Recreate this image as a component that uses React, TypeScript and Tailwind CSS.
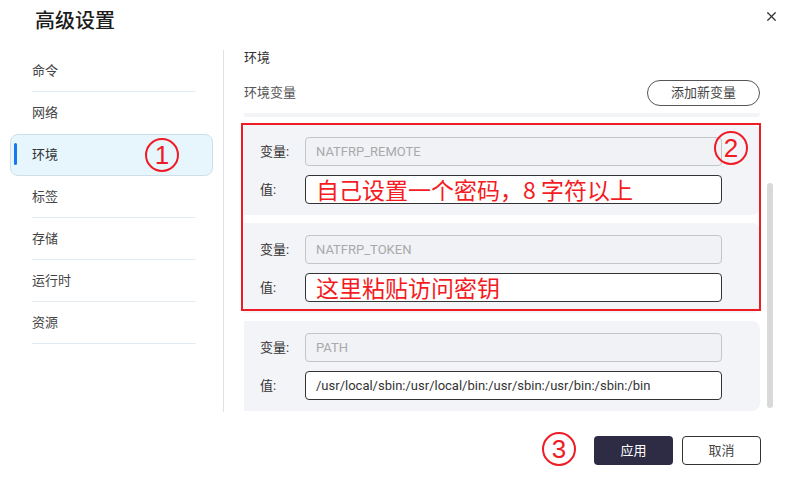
import React from "react";
import { X } from "lucide-react";

const font = "'Roboto', 'Noto Sans CJK SC', sans-serif";
const cjk = "'Noto Sans CJK SC', sans-serif";

const navItems = ["命令", "网络", "环境", "标签", "存储", "运行时", "资源"];
const selected = 2;

interface EnvVar {
  name: string;
  value: string;
  hint?: boolean;
}

const envVars: EnvVar[] = [
  { name: "NATFRP_REMOTE", value: "自己设置一个密码，8 字符以上", hint: true },
  { name: "NATFRP_TOKEN", value: "这里粘贴访问密钥", hint: true },
  { name: "PATH", value: "/usr/local/sbin:/usr/local/bin:/usr/sbin:/usr/bin:/sbin:/bin" },
];

function Mark({ n }: { n: string }) {
  return (
    <span
      className="flex h-[34px] w-[34px] items-center justify-center rounded-full border-2 border-[#ee1c25] text-[26px] leading-none text-[#ee1c25]"
      style={{ fontFamily: "'Liberation Sans', sans-serif" }}
    >
      {n}
    </span>
  );
}

function EnvCard({ v }: { v: EnvVar }) {
  return (
    <div className="flex h-[90px] shrink-0 flex-col gap-[9px] rounded-r-lg bg-[#f3f4f8] pl-4 pt-[12px]">
      <div className="flex items-center">
        <span className="w-[45px] text-[13px] leading-[18px] text-[#333]">变量:</span>
        <div className="flex h-[29px] w-[417px] items-center rounded-[4px] border border-[#c4c5c9] bg-[#f1f2f6] px-[10px] text-[13px] text-[#a9a9a9]">
          {v.name}
        </div>
      </div>
      <div className="flex items-center">
        <span className="w-[45px] text-[13px] leading-[18px] text-[#333]">值:</span>
        <div className="flex h-[29px] w-[417px] items-center whitespace-nowrap rounded-[4px] border border-[#333] bg-white px-[10px]">
          {v.hint ? (
            <span className="text-[23px] leading-[23px] text-[#f41b23]" style={{ fontFamily: cjk }}>
              {v.value}
            </span>
          ) : (
            <span className="text-[13px] text-[#333]">{v.value}</span>
          )}
        </div>
      </div>
    </div>
  );
}

export default function App() {
  return (
    <div className="relative flex h-[478px] w-[789px] flex-col bg-white text-[#333]" style={{ fontFamily: font }}>
      {/* 标题 */}
      <div className="h-[50px] pl-[35px] pt-[8px]">
        <h1 className="text-[20px] leading-[24px] font-medium text-[#1c1c1c]" style={{ fontFamily: cjk }}>
          高级设置
        </h1>
      </div>
      <button className="absolute right-[10px] top-[9px] text-[#333]">
        <X className="h-[15px] w-[15px]" strokeWidth={2} />
      </button>

      <div className="flex h-[362px]">
        {/* 左侧导航 */}
        <div className="w-[224px] border-r border-[#dfe3e8] px-[10px]">
          {navItems.map((item, i) => {
            const active = i === selected;
            const beforeActive = i === selected - 1;
            return (
              <div
                key={item}
                className={
                  active
                    ? "relative flex h-[42px] items-center rounded-lg border border-[#cde0ea] bg-[#e7f6fd] pl-[21px]"
                    : "flex h-[42px] items-center pl-[22px] pr-[17px]"
                }
              >
                {active ? (
                  <>
                    <span className="absolute left-[3px] top-[8px] h-[22px] w-[3px] rounded-full bg-[#1677ee]" />
                    <span className="text-[13px] text-[#333]">{item}</span>
                    <span className="absolute left-[134px] top-[3px]">
                      <Mark n="1" />
                    </span>
                  </>
                ) : (
                  <div
                    className={
                      beforeActive
                        ? "flex h-full w-full items-center"
                        : "flex h-full w-full items-center border-b border-[#e3ecf2]"
                    }
                  >
                    <span className="text-[13px] text-[#444]">{item}</span>
                  </div>
                )}
              </div>
            );
          })}
        </div>

        {/* 右侧内容 */}
        <div className="relative flex-1 pl-[20px] pr-[29px]">
          <div className="-mt-[1px] h-[18px] text-[13px] leading-[18px] text-[#333]">环境</div>
          <div className="mt-[13px] flex h-[26px] items-center justify-between">
            <span className="text-[13px] leading-[18px] text-[#555]">环境变量</span>
            <button className="h-[26px] w-[113px] rounded-full border border-[#555] text-[13px] leading-[18px] text-[#444]">
              添加新变量
            </button>
          </div>

          <div className="relative mt-[7px]">
            <div className="flex h-[299px] flex-col gap-[8px] overflow-hidden">
              {/* 上一张卡片滚出后留下的底边 */}
              <div className="h-[4px] shrink-0 rounded-br-lg bg-[#f3f4f8]" />
              {envVars.map((v) => (
                <EnvCard key={v.name} v={v} />
              ))}
            </div>
            {/* 红框标注 */}
            <div className="pointer-events-none absolute left-[-3px] right-[-1px] top-[10px] h-[188px] border-2 border-[#ee1c25]" />
            <span className="absolute right-[12px] top-[18px]">
              <Mark n="2" />
            </span>
            {/* 滚动条 */}
            <div className="absolute right-[-13px] top-[70px] h-[225px] w-[6px] rounded-full bg-[#d9d9d9]" />
          </div>
        </div>
      </div>

      {/* 底部按钮 */}
      <div className="flex flex-1 items-start justify-end pr-[28px] pt-[20px]">
        <span className="mr-[18px]">
          <Mark n="3" />
        </span>
        <button className="mt-[4px] h-[29px] w-[79px] rounded-[4px] bg-[#2e2b45] text-[13px] text-white">应用</button>
        <button className="ml-[9px] mt-[4px] h-[29px] w-[79px] rounded-[4px] border border-[#333] bg-white text-[13px] text-[#444]">
          取消
        </button>
      </div>
    </div>
  );
}
